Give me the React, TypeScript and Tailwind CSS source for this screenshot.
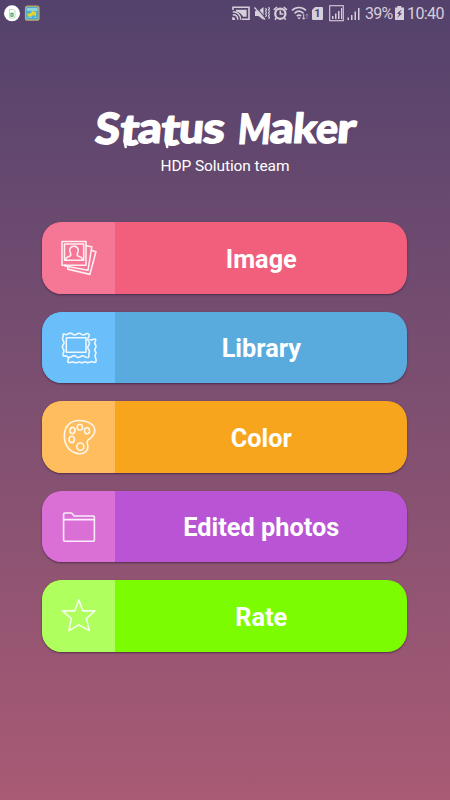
import React from "react";

const CastIcon = () => (
  <svg className="absolute left-[232px] top-[6px]" width="18" height="15" viewBox="0 0 18 15" fill="none" stroke="currentColor">
    <path d="M1 4V1.2h16v12h-7" strokeWidth="1.6" />
    <path d="M4 3.8h10.6v7H11C10 8 7.500 6 4 5.400z" fill="currentColor" stroke="none" />
    <path d="M.8 5.800c4.600 0 8 3.400 8 8M.8 8.700c3 0 5 2 5 5" strokeWidth="1.500" />
    <path d="M.2 11a3 3 0 0 1 3 3h-3z" fill="currentColor" stroke="none" />
  </svg>
);

const MuteIcon = () => (
  <svg className="absolute left-[254px] top-[6px]" width="16" height="15" viewBox="0 0 16 15" fill="none" stroke="currentColor">
    <path d="M1 5h3.500l5-4v13l-5-4H1z" fill="currentColor" stroke="none" />
    <path d="M2 .8l9 11" stroke="#54436c" strokeWidth="1.200" />
    <path d="M.5 1.500l10.500 12" strokeWidth="1.300" />
    <path d="M11.500 2l1 1.500-1 1.500 1 1.500-1 1.500 1 1.500-1 1.500M14.500 1l1 1.500-1 1.500 1 1.500-1 1.500 1 1.500-1 1.500 1 1.500-1 1.500" strokeWidth="1.200" />
  </svg>
);

const AlarmIcon = () => (
  <svg className="absolute left-[273px] top-[6px]" width="15" height="15" viewBox="0 0 15 15" fill="none" stroke="currentColor">
    <circle cx="7.300" cy="7.700" r="5.100" strokeWidth="2.300" />
    <path d="M7.300 4.500v3.500h3M.8 3.800L4 1M10.700 1l3.200 2.800M3.200 12L2 13.800M11.400 12l1.200 1.800" strokeWidth="1.600" />
  </svg>
);

const WifiIcon = () => (
  <svg className="absolute left-[291px] top-[6px]" width="19" height="15" viewBox="0 0 19 15" fill="none" stroke="currentColor">
    <path d="M1 4.500c4-4 10-4 14 0M3.500 7.300c2.800-2.700 6.300-2.700 9 0M5.800 10c1.500-1.300 3-1.300 4.400 0" strokeWidth="1.700" />
    <path d="M6.300 11.500h3.600L8.100 13.500z" fill="currentColor" stroke="none" />
    <path d="M12.700 8v5M11.400 11.800l1.300 1.500 1.300-1.500" strokeWidth="1" />
    <path d="M16 13V8M14.700 9.500L16 8l1.300 1.500" strokeWidth="1" opacity=".4" />
  </svg>
);

const SignalIcons = () => (
  <svg className="absolute left-[329px] top-[5px]" width="33" height="17" viewBox="0 0 33 17" fill="currentColor">
    <rect x=".7" y=".7" width="13.600" height="15" fill="none" stroke="currentColor" strokeWidth="1.100" />
    <path d="M3 11h1.500v3H3zM6 8.500h1.500V14H6zM9 6h1.500v8H9zM12 3h1.200v11H12z" />
    <path d="M18.500 12.500H20V15h-1.500zM22 10h1.500v5H22zM25.500 6.500H27V15h-1.500zM29 3h1.500v12H29z" />
  </svg>
);

function StatusBar() {
  return (
    <header className="relative h-7 w-full text-[#d5cedb]">
      <svg className="absolute left-[4px] top-[5px]" width="40" height="17" viewBox="0 0 40 17">
        <circle cx="8" cy="8.300" r="8" fill="#fff" />
        <path d="M5.500 4.500h4l1.500 1.500v7h-5.500z" fill="#fff" stroke="#b5ceb6" strokeWidth=".8" />
        <path d="M7 8.200h2v3H7z" fill="none" stroke="#3c9e55" strokeWidth="1.100" />
        <rect x="21.500" y="1.200" width="13.500" height="14" rx="2" fill="#4aaecf" stroke="#c4a968" strokeWidth="1.200" />
        <path d="M23 3h10.500v3H23z" fill="#8ed3dc" />
        <path d="M23 9l4-1 1-2 4 1v4l-3-1-2 2-3-1z" fill="#e8d32b" />
        <path d="M23 12.300h5M30 12.300h3" stroke="#79d1e5" />
      </svg>
      <CastIcon />
      <MuteIcon />
      <AlarmIcon />
      <WifiIcon />
      <div className="absolute left-[312px] top-[7px] h-[13px] w-[11px] rounded-[1px] bg-current text-center [clip-path:polygon(28%_0,100%_0,100%_100%,0_100%,0_24%)]">
        <span className="block text-[11px] font-bold leading-[13px] text-[#54436c]">1</span>
      </div>
      <SignalIcons />
      <span className="absolute left-[365px] top-[4px] text-[16px] leading-[20px] tracking-[-0.75px]">39%</span>
      <svg className="absolute left-[394px] top-[6px]" width="11" height="15" viewBox="0 0 11 15">
        <path d="M3.300 0h4v1.500H10V14H1V1.500h2.300z" fill="currentColor" />
        <path d="M7.800 3.200L3 7.500l2.300.7L3 12l5-4.500-2.300-.5z" fill="#54436c" />
      </svg>
      <span className="absolute left-[407px] top-[4px] text-[16px] leading-[20px] tracking-[-0.6px]">10:40</span>
    </header>
  );
}

interface Letter {
  char: string;
  x: number;
  width: number;
  size: number;
  y: number;
}

const titleLetters: Letter[] = [
  { char: "S", x: 4, width: 25, size: 43, y: 37.5 },
  { char: "t", x: 29, width: 19, size: 43, y: 38.5 },
  { char: "a", x: 47, width: 24, size: 43, y: 37 },
  { char: "t", x: 70, width: 19, size: 43, y: 38.5 },
  { char: "u", x: 88, width: 25, size: 42, y: 37 },
  { char: "s", x: 112, width: 22, size: 43, y: 37 },
  { char: "M", x: 147, width: 33, size: 42, y: 37.5 },
  { char: "a", x: 179, width: 24, size: 43, y: 37 },
  { char: "k", x: 202, width: 24, size: 41, y: 37 },
  { char: "e", x: 225, width: 22, size: 42, y: 37 },
  { char: "r", x: 246, width: 19, size: 42, y: 37 },
];

function Title() {
  return (
    <h1 aria-label="Status Maker">
      <svg width="270" height="66" viewBox="0 -12 270 66" className="block overflow-visible">
        <g fill="#fff" stroke="#fff" strokeWidth="1.200" strokeLinejoin="round" fontFamily="Lato, sans-serif" fontWeight="900">
          {titleLetters.map(({ char, x, width, size, y }, i) => (
            <text key={i} transform={`translate(${x} ${y}) skewX(-5)`} fontSize={size} textLength={width} lengthAdjust="spacingAndGlyphs">{char}</text>
          ))}
        </g>
        <path d="M34.500 35l1.200 6M76 35l1.200 6" stroke="#fff" strokeWidth="2.500" strokeLinecap="round" />
      </svg>
    </h1>
  );
}

const photos = (
  <>
    <path d="M1 1.500h24v23.700H1zM3.500 4h19.200v16.300H3.500z" />
    <path d="M5 20v-1.600c.3-1.700 3.500-1.500 4.700-3v-1.800C7.500 9.500 9.400 6.100 13 6.100s5.500 3.400 3.300 7.500v1.800c1.300 1.500 4.600 1.300 4.700 3V20" />
    <path d="M25.300 5.800l5.500.9L27 30.300 4 26v-1M30.200 10.200l4.700 1.600-6 22.600-22.200-5.300v-2" />
  </>
);

const frames = (
  <>
    <path d="M5.300 7.800H25v14.400H5.300z" />
    <path d="M3 3.700q2 2.100 4.400 0 2.400-1.300 4.500.7 2 1.300 4.200-.6 2.200-1.400 4.500.6 2.200 1.300 4.200-.6 1.700-.8 3.200.5.600 1.600-.5 3-1.500 2.200.3 4.300 1.400 2-.3 4-1.500 2 .2 4.200 1.500 2-.1 4 .9 2.200-.3 3.600-2.200.4-3.800-1-2.200-1.300-4.400.5-2.200 1.200-4.300-.6-2.200-1.500-4.400.5-2.200 1.300-4.200-.3-2-1-3.700-.4-1-1.500-.2-3.300 1.300-2-.2-4-1.400-2.100.2-4.200 1.500-2-.2-4-1.300-2.300.2-4.200-.8-2 .7-2.700z" />
    <path d="M29 9.800c2.300.5 3.600-1.500 5.500-.5.900 1.600-1.300 2.500-.6 4.300.7 1.900 1.900 2.300.6 4.300-1.300 1.700-1 2.700.2 4.200 1 1.500-1.100 2.600-.6 4.300.5 2.200 1.800 3.700.6 5.700-1.800 1-2.800-.8-4.700-.4-2 .6-2.500 1.700-4.500.5-2-1.300-2.700.5-4.400.6-2-.1-2.300-1.600-4.400-.5-2 1.200-3 .3-4.600-.4-1.600-.5-3.400 1.600-5 .4-1.200-1.600.9-2.300.1-4.600" />
  </>
);

const palette = (
  <>
    <path d="M18 1.500C9 1.500 3.300 8 3.300 16.500c0 10.500 6.200 18.300 15.700 18.300 5.300 0 8.600-3.800 7.800-8.200-.5-2.600-1.700-4 .3-5.600 2.100-1.600 6.700-4.600 6.700-9.600 0-5.700-6.500-9.900-15.800-9.900z" />
    <ellipse cx="11.500" cy="11.500" rx="2.500" ry="3.100" transform="rotate(12 11.500 11.500)" />
    <ellipse cx="18.800" cy="8.300" rx="2.600" ry="3" />
    <ellipse cx="26" cy="11.700" rx="2.500" ry="3.100" transform="rotate(-12 26 11.700)" />
    <ellipse cx="10.700" cy="20.400" rx="2.600" ry="3.200" />
    <circle cx="19.300" cy="27.600" r="3.600" />
  </>
);

const folder = (
  <path d="M3.800 32.300h28.400q1.200 0 1.200-1.200V8.200q0-1.200-1.200-1.200H13.200l-2-2.500q-.5-.5-1.200-.5H3.800q-1.200 0-1.200 1.200v25.900q0 1.200 1.200 1.200zM2.800 10.600h30.400" />
);

const star = (
  <path d="M17.900 1.900l4 11h12l-8.500 7.700 3 12-10.500-5.700L8 32.600l2.300-12-8.900-7.700h12.300z" />
);

function MenuButton({ label, color, tint, children }: { label: string; color: string; tint: string; children: React.ReactNode }) {
  return (
    <button className={`flex h-[71.500px] w-[365px] overflow-hidden rounded-[20px] shadow-[0_1px_2px_rgba(40,20,50,0.6)] ${color}`}>
      <span className={`flex h-full w-[73px] shrink-0 items-center justify-center ${tint}`}>
        <svg width="36" height="36" viewBox="0 0 36 36" fill="none" stroke="white" strokeOpacity=".87" strokeWidth="1.600" strokeLinejoin="round" strokeLinecap="round">
          {children}
        </svg>
      </span>
      <span className="flex h-full flex-1 items-center justify-center pt-[3px] text-[25.300px] font-bold leading-none text-white">{label}</span>
    </button>
  );
}

export default function App() {
  return (
    <main className="flex h-[800px] w-[450px] flex-col items-center overflow-hidden bg-linear-to-b from-[#53426c] to-[#a95a74] font-[Roboto,sans-serif] text-white">
      <StatusBar />
      <div className="mt-[66px] flex flex-col items-center">
        <Title />
        <p className="-mt-1 text-[15.500px] leading-[20px] tracking-[-0.1px]">HDP Solution team</p>
      </div>
      <nav className="mt-[46.400px] flex flex-col gap-[18px] pr-[0.400px]">
        <MenuButton label="Image" color="bg-[#f25f7c]" tint="bg-[#f57795]">{photos}</MenuButton>
        <MenuButton label="Library" color="bg-[#59abdd]" tint="bg-[#6abffb]">{frames}</MenuButton>
        <MenuButton label="Color" color="bg-[#f8a51e]" tint="bg-[#ffbd5e]">{palette}</MenuButton>
        <MenuButton label="Edited photos" color="bg-[#b955d4]" tint="bg-[#da70d6]">{folder}</MenuButton>
        <MenuButton label="Rate" color="bg-[#7cfc00]" tint="bg-[#afff5e]">{star}</MenuButton>
      </nav>
    </main>
  );
}
